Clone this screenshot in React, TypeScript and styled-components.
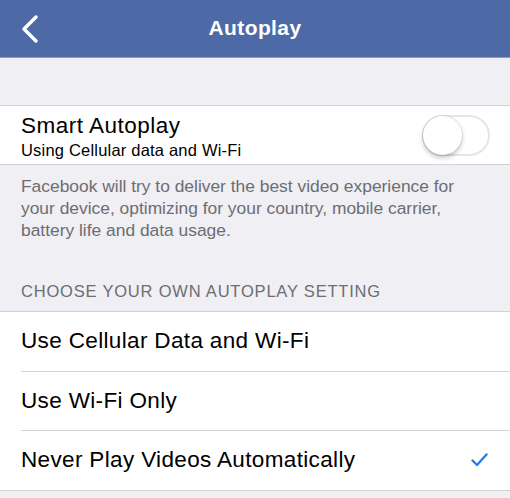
import React, { useState } from "react";
import styled, { createGlobalStyle } from "styled-components";

const Global = createGlobalStyle`
  html, body { margin: 0; padding: 0; }
  body {
    background: #efeff4;
    font-family: "Liberation Sans", Arial, Helvetica, sans-serif;
    -webkit-font-smoothing: antialiased;
  }
`;

const Screen = styled.div`
  width: 510px;
  min-height: 498px;
  background: #efeff4;
  display: flex;
  flex-direction: column;
`;

const NavBar = styled.header`
  height: 57px;
  background: #4d6aa6;
  border-bottom: 1px solid #8b9cc2;
  display: grid;
  grid-template-columns: 60px 1fr 60px;
  align-items: center;
`;

const BackButton = styled.button`
  background: none;
  border: 0;
  padding: 0 0 0 20px;
  height: 100%;
  display: flex;
  align-items: center;
  cursor: pointer;
`;

const Title = styled.h1`
  margin: 0;
  text-align: center;
  color: #fff;
  font-size: 21px;
  font-weight: 700;
  letter-spacing: 0.4px;
  padding-bottom: 1px;
`;

const Spacer = styled.div<{ $h: number }>`
  height: ${(p) => p.$h}px;
`;

const Group = styled.section`
  background: #fff;
  border-top: 1px solid #d2d1d6;
  border-bottom: 1px solid #d2d1d6;
`;

const ToggleRow = styled.div`
  height: 58px;
  display: flex;
  align-items: center;
  justify-content: space-between;
  padding: 0 21px;
`;

const Labels = styled.div`
  display: flex;
  flex-direction: column;
  padding-top: 3px;
`;

const MainLabel = styled.span`
  font-size: 22.5px;
  line-height: 26px;
  color: #000;
  letter-spacing: 0.5px;
`;

const SubLabel = styled.span`
  font-size: 16.5px;
  line-height: 20px;
  margin-top: 1px;
  color: #000;
  letter-spacing: 0.2px;
`;

const Switch = styled.button<{ $on: boolean }>`
  position: relative;
  width: 68px;
  height: 41px;
  border-radius: 21px;
  border: 2px solid ${(p) => (p.$on ? "#4cd964" : "#e5e5ea")};
  background: ${(p) => (p.$on ? "#4cd964" : "#fff")};
  padding: 0;
  cursor: pointer;
  margin-right: -1px;
`;

const Knob = styled.span<{ $on: boolean }>`
  position: absolute;
  top: -1px;
  left: ${(p) => (p.$on ? "27px" : "-1px")};
  width: 39px;
  height: 39px;
  border-radius: 50%;
  background: #fff;
  box-shadow: 0 3px 5px rgba(0, 0, 0, 0.22), 0 0 0 1px rgba(0, 0, 0, 0.08);
`;

const Footer = styled.p`
  margin: 0;
  padding: 10px 21px 0;
  font-size: 17.4px;
  line-height: 22px;
  color: #6d6d72;
`;

const SectionHeader = styled.h2`
  margin: 0;
  padding: 39px 21px 9px;
  font-size: 16.5px;
  line-height: 22px;
  font-weight: 400;
  color: #6d6d72;
  letter-spacing: 0.8px;
`;

const OptionRow = styled.div`
  height: 58.5px;
  margin-left: 21px;
  padding-right: 22px;
  display: flex;
  align-items: center;
  justify-content: space-between;
  cursor: pointer;
  & + & {
    border-top: 1px solid #d2d1d6;
  }
`;

const OptionText = styled.span`
  font-size: 22.5px;
  color: #000;
  letter-spacing: 0.35px;
`;

const Chevron = () => (
  <svg width="20" height="28" viewBox="0 0 20 28" aria-hidden>
    <path
      d="M16 2 L4 14 L16 26"
      fill="none"
      stroke="#fff"
      strokeWidth="3.4"
      strokeLinecap="round"
      strokeLinejoin="round"
    />
  </svg>
);

const Check = () => (
  <svg width="17" height="14" viewBox="0 0 17 14" aria-hidden>
    <path
      d="M1.5 7.5 L6 12 L15.5 1.5"
      fill="none"
      stroke="#1f7fef"
      strokeWidth="2.4"
      strokeLinecap="round"
      strokeLinejoin="round"
    />
  </svg>
);

const options = [
  "Use Cellular Data and Wi-Fi",
  "Use Wi-Fi Only",
  "Never Play Videos Automatically",
];

export default function App() {
  const [smart, setSmart] = useState(false);
  const [choice, setChoice] = useState(2);

  return (
    <>
      <Global />
      <Screen>
        <NavBar>
          <BackButton aria-label="Back">
            <Chevron />
          </BackButton>
          <Title>Autoplay</Title>
          <div />
        </NavBar>

        <Spacer $h={47} />

        <Group>
          <ToggleRow>
            <Labels>
              <MainLabel>Smart Autoplay</MainLabel>
              <SubLabel>Using Cellular data and Wi-Fi</SubLabel>
            </Labels>
            <Switch $on={smart} onClick={() => setSmart(!smart)} aria-pressed={smart}>
              <Knob $on={smart} />
            </Switch>
          </ToggleRow>
        </Group>

        <Footer>
          Facebook will try to deliver the best video experience for your
          device, optimizing for your country, mobile carrier, battery life and
          data usage.
        </Footer>

        <SectionHeader>CHOOSE YOUR OWN AUTOPLAY SETTING</SectionHeader>

        <Group>
          {options.map((o, i) => (
            <OptionRow key={o} onClick={() => setChoice(i)}>
              <OptionText>{o}</OptionText>
              {choice === i && <Check />}
            </OptionRow>
          ))}
        </Group>
      </Screen>
    </>
  );
}
